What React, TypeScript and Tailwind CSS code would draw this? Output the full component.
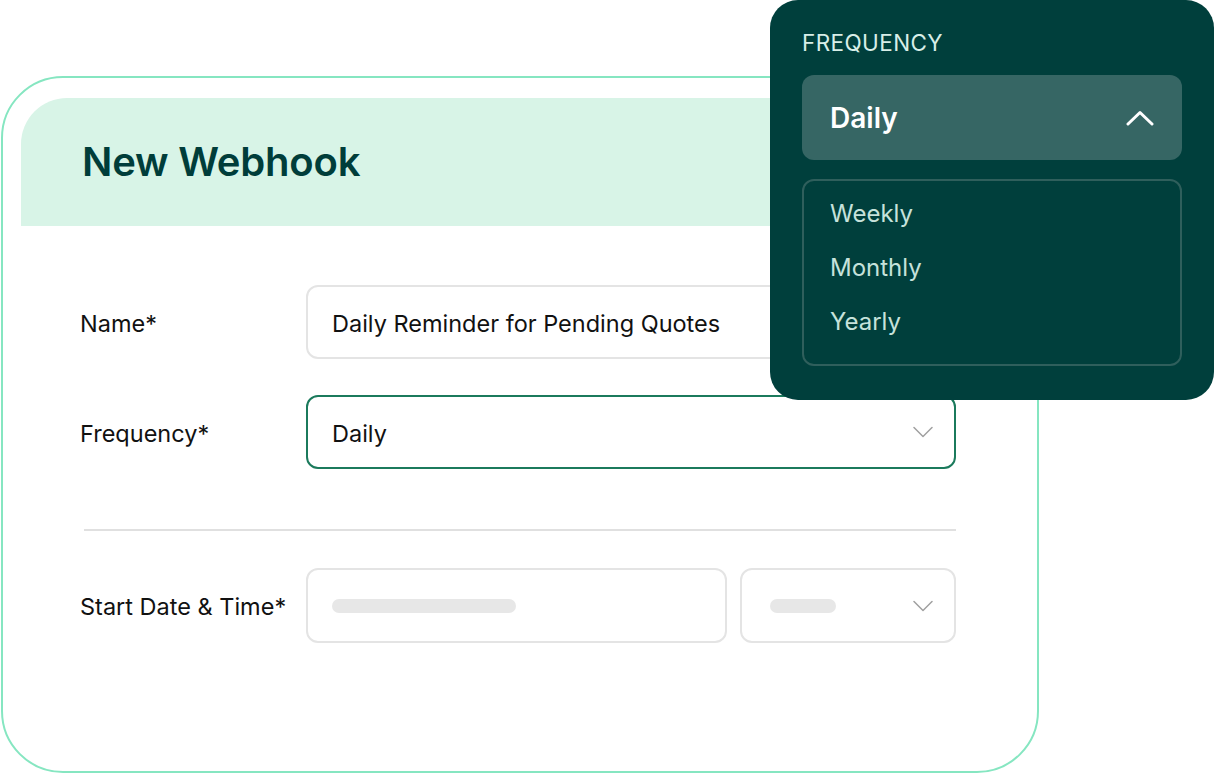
const font = { fontFamily: 'Inter, "Noto Sans", sans-serif' }

function Chevron({ up = false, className = '' }: { up?: boolean; className?: string }) {
  return up ? (
    <svg width="28" height="16" viewBox="0 0 28 16" fill="none" className={className}>
      <path d="M2 14L14 2.5L26 14" stroke="currentColor" strokeWidth="3" strokeLinecap="round" strokeLinejoin="round" />
    </svg>
  ) : (
    <svg width="20" height="12" viewBox="0 0 20 12" fill="none" className={className}>
      <path d="M1 1.5L10 10.5L19 1.5" stroke="currentColor" strokeWidth="1.5" strokeLinecap="round" strokeLinejoin="round" />
    </svg>
  )
}

function Row({ label, children }: { label: string; children: React.ReactNode }) {
  return (
    <div className="flex items-center">
      <div className="w-[285px] shrink-0 whitespace-nowrap pl-[59px] pt-[3px] text-[23.5px] text-[#111]">{label}</div>
      {children}
    </div>
  )
}

export default function App() {
  return (
    <div className="relative h-[774px] w-[1214px] overflow-hidden bg-white" style={font}>
      <div className="pt-[76px]">
        <div className="ml-px h-[697px] w-[1038px] rounded-[62px] border-2 border-[#86e6c1] pt-5 pl-[18px] pr-[18px]">
          <div className="flex h-[128px] items-center rounded-tl-[46px] rounded-tr-[46px] bg-[#d8f4e7] pl-[61px]">
            <h1 className="text-[40px] font-semibold tracking-[-0.2px] text-[#003d3a]">New Webhook</h1>
          </div>

          <div className="flex flex-col pt-[59px]">
            <Row label="Name*">
              <div className="flex h-[74px] w-[650px] items-center rounded-[12px] border-2 border-[#e4e4e4] pl-6 pt-[3px] text-[23.5px] text-[#111]">
                Daily Reminder for Pending Quotes
              </div>
            </Row>
            <div className="h-9" />
            <Row label="Frequency*">
              <div className="flex h-[74px] w-[650px] items-center justify-between rounded-[12px] border-2 border-[#1b7a5c] pl-6 pr-[21px] text-[23.5px] text-[#111]">
                <span className="pt-[3px]">Daily</span>
                <Chevron className="text-[#a0a0a0]" />
              </div>
            </Row>

            <div className="ml-[63px] mt-[60px] h-[2px] w-[872px] bg-[#e0e0e0]" />

            <div className="h-[37px]" />
            <Row label="Start Date & Time*">
              <div className="flex gap-[13px]">
                <div className="flex h-[75px] w-[421px] items-center rounded-[12px] border-2 border-[#e4e4e4] pl-6">
                  <div className="h-[14px] w-[184px] rounded-full bg-[#e7e7e7]" />
                </div>
                <div className="flex h-[75px] w-[216px] items-center justify-between rounded-[12px] border-2 border-[#e4e4e4] pl-7 pr-[21px]">
                  <div className="h-[14px] w-[66px] rounded-full bg-[#e7e7e7]" />
                  <Chevron className="text-[#a0a0a0]" />
                </div>
              </div>
            </Row>
          </div>
        </div>
      </div>

      <div className="absolute right-0 top-0 h-[400px] w-[444px] rounded-[28px] bg-[#003f3c] px-8 pt-[28px]">
        <div className="text-[22.5px] leading-[30px] tracking-[0.4px] text-[#d8eee8]">FREQUENCY</div>
        <div className="mt-[17px] flex h-[85px] w-[380px] items-center justify-between rounded-[12px] bg-[#366664] pl-7 pr-[28px]">
          <span className="text-[28px] font-semibold text-white">Daily</span>
          <Chevron up className="text-white" />
        </div>
        <div className="mt-[19px] flex h-[187px] w-[380px] flex-col gap-[26px] rounded-[12px] border-2 border-[#2f5f5c] pl-[26px] pt-[19px] text-[24px] text-[#c6e2db]">
          <div className="leading-[28px]">Weekly</div>
          <div className="leading-[28px]">Monthly</div>
          <div className="leading-[28px]">Yearly</div>
        </div>
      </div>
    </div>
  )
}
